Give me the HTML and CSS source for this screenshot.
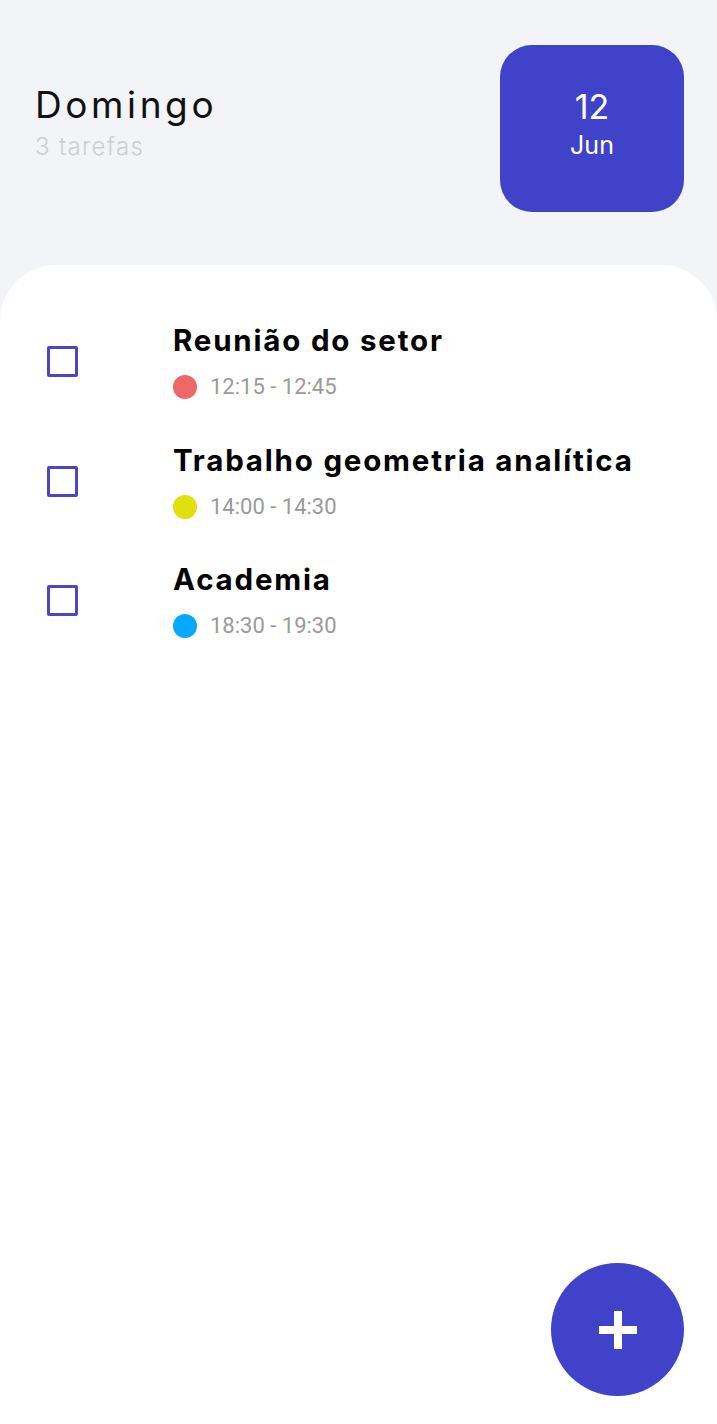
FILE: index.html
```html
<!DOCTYPE html>
<html lang="pt">
<head>
<meta charset="utf-8">
<title>Tarefas</title>
<link rel="stylesheet" href="styles.css">
</head>
<body>
<div class="app">
  <header class="header">
    <div class="day">
      <h1 class="day-name">Domingo</h1>
      <p class="day-count">3 tarefas</p>
    </div>
    <div class="date-box">
      <span class="date-num">12</span>
      <span class="date-month">Jun</span>
    </div>
  </header>
  <main class="card">
    <ul class="tasks">
      <li class="task">
        <span class="check"></span>
        <div class="task-body">
          <span class="task-title">Reunião do setor</span>
          <span class="task-time"><i class="dot dot-red"></i>12:15 - 12:45</span>
        </div>
      </li>
      <li class="task">
        <span class="check"></span>
        <div class="task-body">
          <span class="task-title">Trabalho geometria analítica</span>
          <span class="task-time"><i class="dot dot-yellow"></i>14:00 - 14:30</span>
        </div>
      </li>
      <li class="task">
        <span class="check"></span>
        <div class="task-body">
          <span class="task-title">Academia</span>
          <span class="task-time"><i class="dot dot-blue"></i>18:30 - 19:30</span>
        </div>
      </li>
    </ul>
  </main>
  <button class="fab" aria-label="Adicionar tarefa">
    <svg width="38" height="38" viewBox="0 0 38 38"><rect x="15" y="0" width="8" height="38" fill="#fff"/><rect x="0" y="15" width="38" height="8" fill="#fff"/></svg>
  </button>
</div>
</body>
</html>
```
FILE: styles.css
```css
* { box-sizing: border-box; }
html, body { margin: 0; padding: 0; }
body {
  background: #f3f4f7;
  font-family: "Inter", "Open Sans", sans-serif;
  width: 717px;
  height: 1424px;
  overflow: hidden;
}
.app {
  position: relative;
  height: 1424px;
  display: flex;
  flex-direction: column;
}
.header {
  display: flex;
  justify-content: space-between;
  align-items: flex-start;
  padding: 45px 33px 0 35px;
}
.day { padding-top: 39px; }
.day-name {
  margin: 0;
  font-size: 37px;
  font-weight: 400;
  line-height: 42px;
  color: #111;
  letter-spacing: 3.6px;
}
.day-count {
  margin: 7px 0 0;
  font-size: 24px;
  font-weight: 300;
  line-height: 28px;
  color: #cdced1;
  letter-spacing: 1.3px;
}
.date-box {
  width: 184px;
  height: 167px;
  border-radius: 32px;
  background: #4043c9;
  color: #fff;
  display: flex;
  flex-direction: column;
  align-items: center;
  padding-top: 42px;
}
.date-num { font-size: 34px; line-height: 40px; }
.date-month { font-size: 25px; line-height: 30px; margin-top: 3px; }
.card {
  flex: 1;
  margin-top: 53px;
  background: #fff;
  border-radius: 56px 56px 0 0;
  padding-top: 58px;
}
.tasks { list-style: none; margin: 0; padding: 0; }
.task {
  display: flex;
  height: 119.5px;
  padding-left: 47px;
  align-items: flex-start;
}
.check {
  width: 31px;
  height: 31px;
  border: 3px solid #4a47c2;
  border-radius: 2px;
  margin-top: 23px;
  flex: none;
}
.task-body {
  margin-left: 95px;
  display: flex;
  flex-direction: column;
}
.task-title {
  font-size: 29.5px;
  font-weight: 700;
  line-height: 34px;
  color: #000;
  letter-spacing: 1.8px;
}
.task-time {
  display: flex;
  align-items: center;
  margin-top: 17px;
  font-family: "Roboto", sans-serif;
  font-size: 22px;
  line-height: 26px;
  color: #9a9a9a;
}
.dot {
  width: 24px;
  height: 24px;
  border-radius: 50%;
  margin-right: 13px;
}
.dot-red { background: #ee6868; }
.dot-yellow { background: #dfe00c; }
.dot-blue { background: #06a9fb; }
.fab {
  position: absolute;
  left: 551px;
  top: 1263px;
  width: 133px;
  height: 133px;
  border-radius: 50%;
  border: none;
  background: #4043c9;
  display: flex;
  align-items: center;
  justify-content: center;
  padding: 0;
}
```
